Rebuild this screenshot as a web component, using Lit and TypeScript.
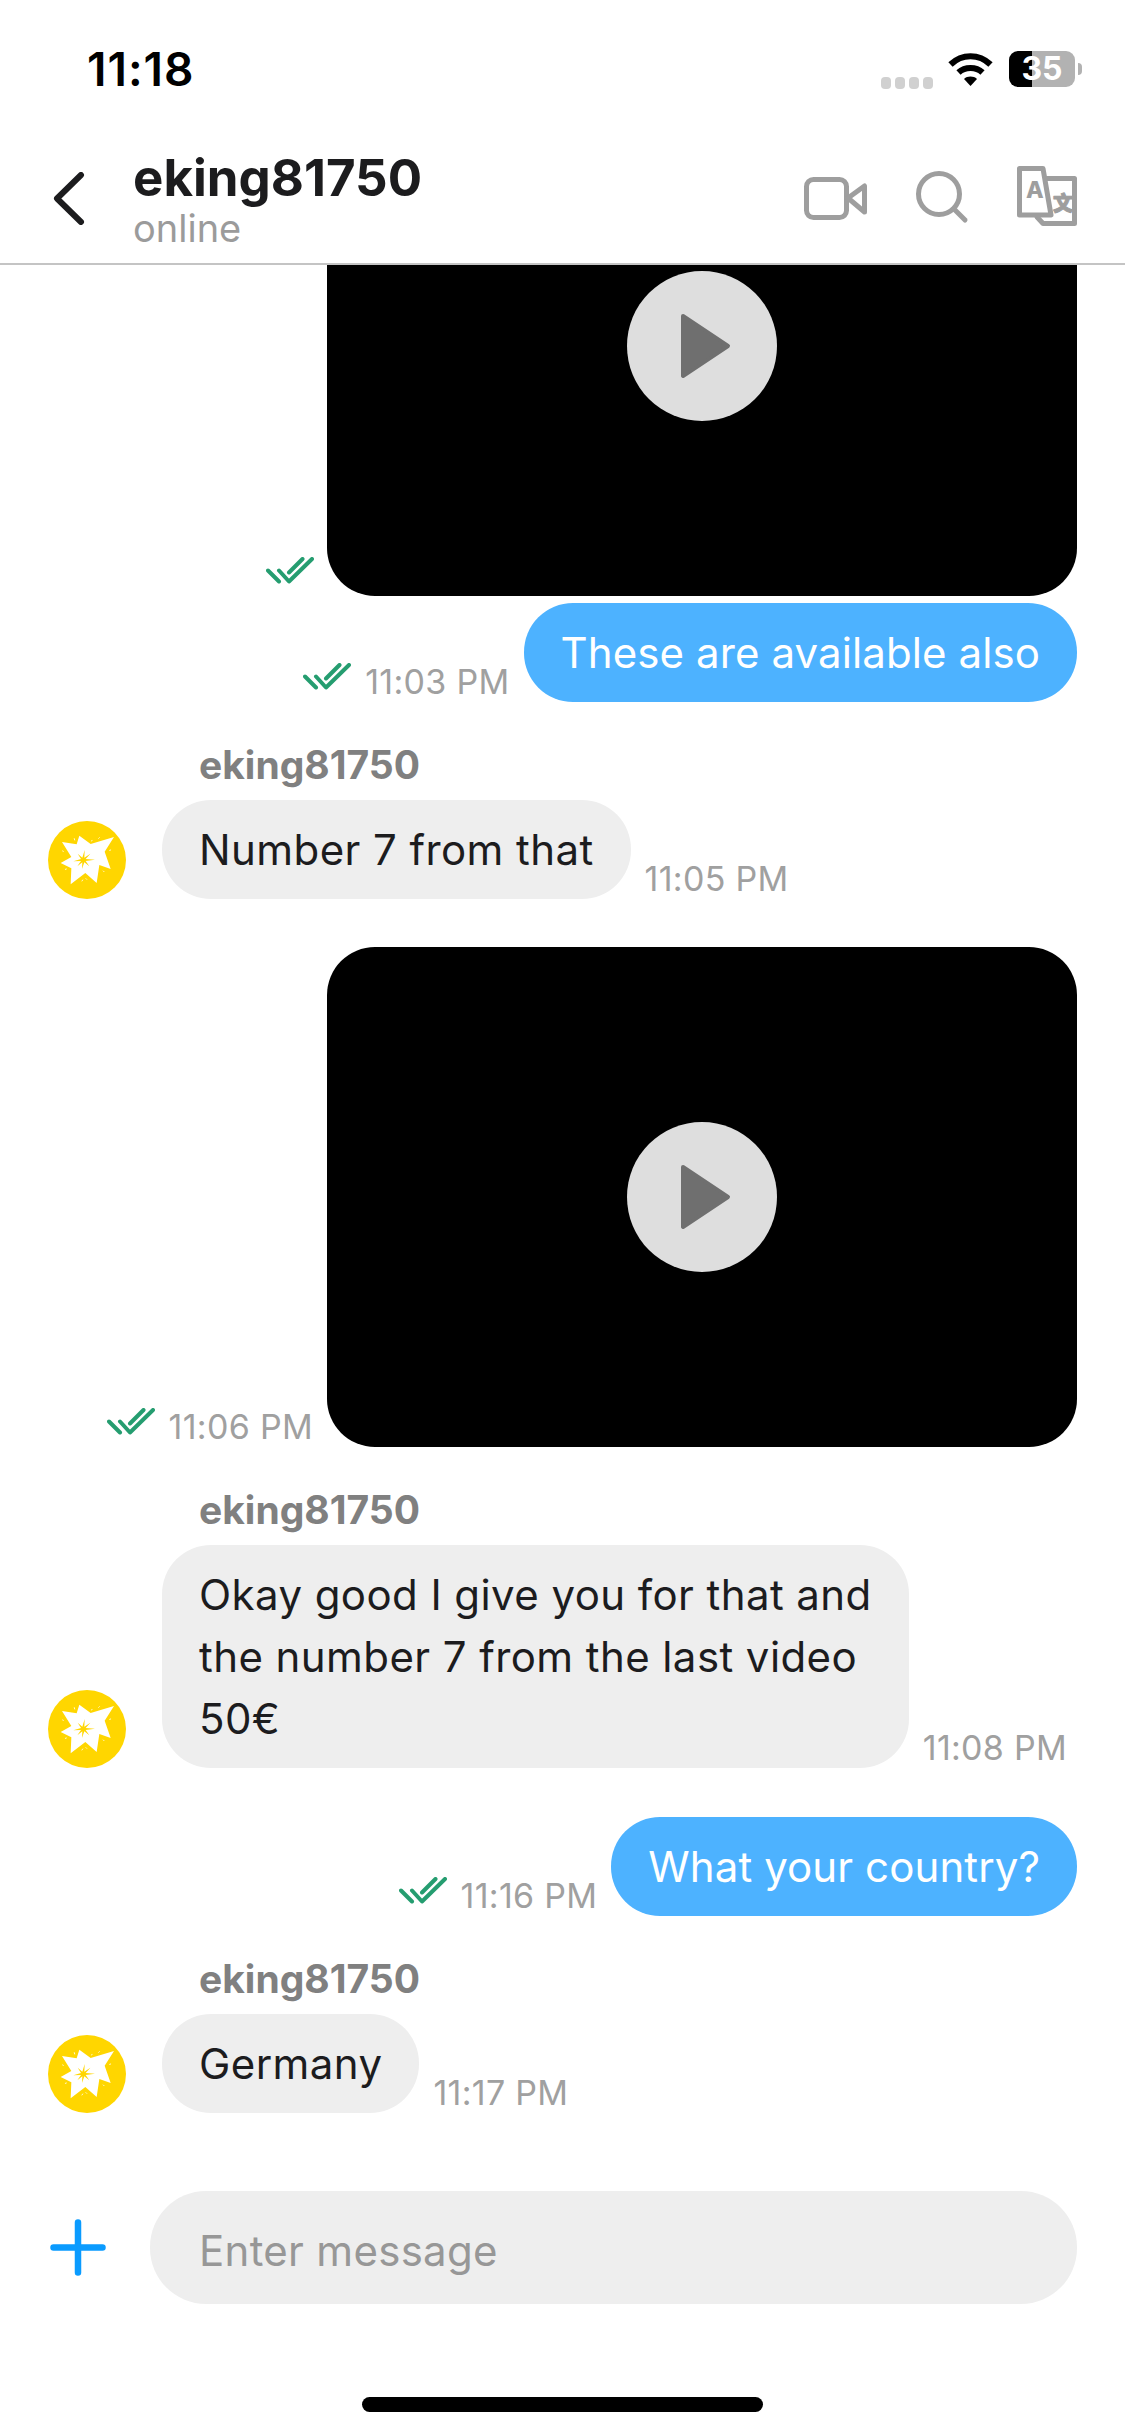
import { LitElement, html, css } from "lit";
import { customElement } from "lit/decorators.js";

const ticks = (solo = false) => html`<svg class="ticks ${solo ? "solo" : ""}" width="48" height="27" viewBox="0 0 48 27" fill="none" stroke="#259d70" stroke-width="4" stroke-linecap="round" stroke-linejoin="round">
  <path d="M2 13.5 L13 24.5"/><path d="M13 13.5 L23 24.5 L46 2"/><path d="M23 15.5 L36.5 2"/>
</svg>`;

const avatar = html`<svg class="avatar" width="78" height="78" viewBox="24 30 234 234">
  <circle cx="141" cy="147" r="117" fill="#ffd600"/>
  <path fill="#fff" d="M118 74 L152 99 L222 78 L194 122 L212 174 L178 162 L170 216 L136 186 L92 220 L94 172 L62 156 L94 138 L66 93 L110 100 Z"/>
  <path fill="#ffd600" d="M134 117 L133 140 L151 128 L137 144 L165 146 L137 150 L148 166 L133 154 L126 174 L127 154 L112 166 L123 150 L100 151 L123 144 L113 128 L127 140 Z"/>
  <path stroke="#fff" stroke-width="2.5" stroke-linecap="round" d="M103 83 l1 4 M155 90 l1 -2 M178 80 l-2 2 M212 117 l-3 1 M68 120 l2 1 M76 175 l3 -1 M126 210 l2 -3 M192 182 l-2 -2 M140 205 l-2 -2"/>
</svg>`;

const play = html`<div class="play"><svg width="51" height="66" viewBox="0 0 51 66"><path d="M3 3 L48 33 L3 63 Z" fill="#6f6f6f" stroke="#6f6f6f" stroke-width="4" stroke-linejoin="round"/></svg></div>`;

@customElement("app-root")
export class AppRoot extends LitElement {
  static styles = css`
    :host { display: flex; flex-direction: column; width: 1125px; height: 2436px; background: #fff; overflow: hidden; font-family: Inter, "Liberation Sans", sans-serif; color: #1c1c1e; }
    .status { height: 130px; flex: none; display: flex; justify-content: space-between; align-items: flex-start; padding: 0 43px 0 87px; box-sizing: border-box; }
    .clock { font-size: 46px; font-weight: 600; line-height: 50px; margin-top: 44px; color: #000; letter-spacing: 1px; }
    .sys { display: flex; align-items: flex-end; margin-top: 51px; height: 37px; }
    .dots { display: flex; gap: 4px; margin-right: 15px; margin-bottom: -1px; }
    .dots i { display: block; width: 10px; height: 12px; border-radius: 4px; background: #d0d0d0; }
    .wifi { margin-right: 16px; margin-bottom: 2px; display: block; }
    .batt { width: 66px; height: 36px; border-radius: 9px; background: linear-gradient(90deg, #000 23px, #b2b2b2 23px); color: #fff; font-size: 32px; font-weight: 700; line-height: 36px; text-align: center; margin-bottom: 1px; }
    .nub { width: 4px; height: 12px; background: #b2b2b2; border-radius: 0 4px 4px 0; margin: 0 0 13px 3px; }

    .header { height: 135px; flex: none; box-sizing: border-box; border-bottom: 2px solid #c4c4c4; display: flex; align-items: flex-start; padding: 0 48px 0 52px; }
    .back { margin-top: 42px; display: block; }
    .who { margin-left: 48px; flex: 1; }
    .title { font-size: 51px; font-weight: 700; line-height: 58px; margin-top: 19px; color: #1c1c1e; }
    .sub { font-size: 38px; line-height: 42px; color: #9b9b9b; }
    .icons { display: flex; align-items: flex-start; margin-top: 36px; }
    .icons svg { display: block; }

    .list { flex: 1; min-height: 0; overflow: hidden; display: flex; flex-direction: column; padding: 0 48px; }
    .row { display: flex; align-items: flex-end; flex: none; }
    .out { justify-content: flex-end; }
    .video { width: 750px; height: 500px; background: #000; border-radius: 48px; display: flex; align-items: center; justify-content: center; flex: none; }
    .play { width: 150px; height: 150px; border-radius: 50%; background: #dedede; display: flex; align-items: center; justify-content: center; }
    .play svg { margin-left: 7px; display: block; }
    .ticks { display: block; margin-bottom: 12px; flex: none; }
    .time { font-size: 34px; line-height: 40px; color: #a0a0a0; white-space: nowrap; flex: none; letter-spacing: 0.3px; }
    .out .ticks + .time { margin-left: 14px; }
    .out .time { margin-right: 14px; }
    .out .ticks.solo { margin-right: 13px; }
    .bubble { font-size: 42px; line-height: 62px; padding: 18.5px 37px; border-radius: 49px; flex: none; }
    .blue { background: #4db2ff; color: #fff; letter-spacing: 0.1px; }
    .grey { background: #eeeeee; color: #1c1c1e; letter-spacing: 0.42px; }
    .in .time { margin-left: 14px; }
    .avatar { display: block; flex: none; margin-right: 36px; }
    .body { display: flex; flex-direction: column; align-items: flex-start; }
    .name { font-size: 39px; line-height: 44px; margin-top: -1px; font-weight: 700; color: #808080; padding-left: 37px; margin-bottom: 13px; }
    .line { display: flex; align-items: flex-end; }
    .r1 { margin-top: -169px; }
    .r2 { margin-top: 7px; }
    .r3 { margin-top: 42px; }
    .r4 { margin-top: 48px; }
    .r6 { margin-top: 49px; }

    .compose { flex: none; height: 245px; box-sizing: border-box; padding: 0 48px 0 50px; display: flex; align-items: flex-start; position: relative; }
    .plus { display: block; margin-top: 28px; margin-right: 44px; flex: none; }
    .field { flex: 1; height: 113px; border-radius: 56px; background: #eeeeee; color: #979797; font-size: 42px; letter-spacing: 0.3px; line-height: 119px; padding-left: 49px; box-sizing: border-box; }
    .home { position: absolute; left: 362px; top: 206px; width: 401px; height: 15px; border-radius: 8px; background: #000; }
  `;

  private out(time: string, text: string, cls: string) {
    return html`<div class="row out ${cls}">${ticks()}<span class="time">${time}</span><div class="bubble blue">${text}</div></div>`;
  }

  private incoming(time: string, text: unknown, cls: string) {
    return html`<div class="row in ${cls}">${avatar}<div class="body"><div class="name">eking81750</div><div class="line"><div class="bubble grey">${text}</div><span class="time">${time}</span></div></div></div>`;
  }

  render() {
    return html`
      <div class="status">
        <div class="clock">11:18</div>
        <div class="sys">
          <div class="dots"><i></i><i></i><i></i><i></i></div>
          <svg class="wifi" width="45" height="33" viewBox="0 0 45 33">
            <path fill="none" stroke="#000" stroke-width="6.2" d="M2.5 11.5 C14 0.5 31 0.5 42.5 11.5"/>
            <path fill="none" stroke="#000" stroke-width="6.2" d="M10.5 19.5 C17 13.5 28 13.5 34.5 19.5"/>
            <path fill="#000" d="M22.5 33 L16 26 C19.5 22.8 25.5 22.8 29 26 Z"/>
          </svg>
          <div class="batt">35</div>
          <div class="nub"></div>
        </div>
      </div>
      <div class="header">
        <svg class="back" width="33" height="53" viewBox="0 0 33 53" fill="none" stroke="#1c1c1e" stroke-width="6" stroke-linecap="round" stroke-linejoin="round"><path d="M29 3 L5 26.5 L29 50"/></svg>
        <div class="who">
          <div class="title">eking81750</div>
          <div class="sub">online</div>
        </div>
        <div class="icons">
          <svg width="273" height="60" viewBox="804 166 273 60" fill="none" stroke="#9e9e9e" stroke-width="5" stroke-linejoin="round" stroke-linecap="round">
            <rect x="806.5" y="179.5" width="40" height="38" rx="7"/>
            <path d="M848 198 L864.5 186 V212 Z"/>
            <circle cx="939" cy="194" r="20.5"/>
            <path d="M954 209 L965 220"/>
            <path d="M1047 178.5 H1074.5 V223.5 H1043 L1037 217"/>
            <path d="M1019.5 168.5 H1043 L1051 215 H1019.5 Z"/>
            <text x="1026" y="198" font-family="Inter, sans-serif" font-size="23" font-weight="800" fill="#9e9e9e" stroke="none">A</text>
            <text x="1053" y="211" font-family="'Noto Sans CJK SC', sans-serif" font-size="20" font-weight="900" fill="#9e9e9e" stroke="#9e9e9e" stroke-width="1">文</text>
          </svg>
        </div>
      </div>
      <div class="list">
        <div class="row out r1">${ticks(true)}<div class="video">${play}</div></div>
        ${this.out("11:03 PM", "These are available also", "r2")}
        ${this.incoming("11:05 PM", "Number 7 from that", "r3")}
        <div class="row out r4">${ticks()}<span class="time">11:06 PM</span><div class="video">${play}</div></div>
        ${this.incoming("11:08 PM", html`Okay good I give you for that and<br />the number 7 from the last video<br />50€`, "r3")}
        ${this.out("11:16 PM", "What your country?", "r6")}
        ${this.incoming("11:17 PM", "Germany", "r3")}
      </div>
      <div class="compose">
        <svg class="plus" width="56" height="57" viewBox="0 0 56 57" fill="none" stroke="#0a9bff" stroke-width="6.5" stroke-linecap="round"><path d="M3.5 28.5 H52.5 M28 3.5 V53.5"/></svg>
        <div class="field">Enter message</div>
        <div class="home"></div>
      </div>
    `;
  }
}
